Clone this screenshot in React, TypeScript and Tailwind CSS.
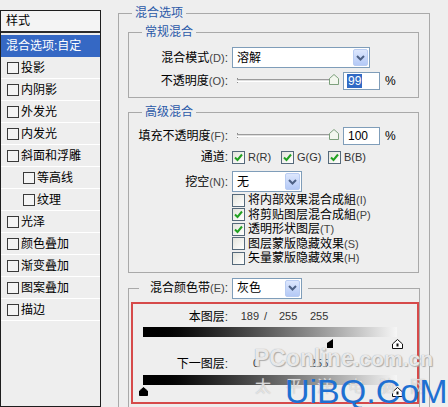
import React from "react";

const styleItems = [
  { t: "投影" },
  { t: "内阴影" },
  { t: "外发光" },
  { t: "内发光" },
  { t: "斜面和浮雕" },
  { t: "等高线", indent: true },
  { t: "纹理", indent: true },
  { t: "光泽" },
  { t: "颜色叠加" },
  { t: "渐变叠加" },
  { t: "图案叠加" },
  { t: "描边" },
];

const Label = ({ text, hk, w }: { text: string; hk?: string; w: string }) => (
  <div className={`${w} shrink-0 whitespace-nowrap text-right text-[12px] leading-[14px]`}>
    {text}
    {hk && <span className="text-[11px] text-[#444]">({hk})</span>}
    <span className="text-[#333]">:</span>
  </div>
);

const Chevron = () => (
  <svg width="9" height="6" viewBox="0 0 9 6">
    <path d="M1 1L4.5 4.5L8 1" fill="none" stroke="#4d6185" strokeWidth="2" />
  </svg>
);

const Select = ({ value, w }: { value: string; w: string }) => (
  <div className={`${w} flex h-[21px] shrink-0 items-center border border-[#7f9db9] bg-white pl-[4px] pr-[1px]`}>
    <span className="flex-1 text-[12px] leading-[14px]">{value}</span>
    <div className="flex h-[17px] w-[15px] items-center justify-center rounded-[2px] border border-[#b9ccf2] bg-linear-to-b from-[#dde7fd] to-[#b4c9f6]">
      <Chevron />
    </div>
  </div>
);

const Thumb = () => (
  <svg width="10" height="11" viewBox="0 0 10 11">
    <path d="M0.5 4.5L5 0.5L9.5 4.5V10.5H0.5Z" fill="#f3f7ef" stroke="#7da07d" />
  </svg>
);

const Slider = () => (
  <div className="relative ml-[9px] h-[18px] w-[101px] shrink-0">
    <div className="absolute left-0 top-[6px] h-[5px] w-[1px] bg-[#8a8a8a]" />
    <div className="absolute left-0 top-[7px] h-[3px] w-[96px] border-t border-b border-t-[#9c9c9c] border-b-white bg-[#dedede]" />
    <div className="absolute left-[92px] top-[2px]">
      <Thumb />
    </div>
  </div>
);

const Check = ({ checked }: { checked?: boolean }) => (
  <div className="flex h-[13px] w-[13px] shrink-0 items-center justify-center border border-[#55697a] bg-linear-to-br from-[#e4e4dc] to-white">
    {checked && (
      <svg width="9" height="9" viewBox="0 0 9 9">
        <path d="M1 4.5L3.5 7L8 1.5" fill="none" stroke="#21a121" strokeWidth="2" />
      </svg>
    )}
  </div>
);

const CheckRow = ({ text, hk, checked }: { text: string; hk: string; checked?: boolean }) => (
  <div className="flex h-[14.5px] items-center gap-[3px]">
    <Check checked={checked} />
    <span className="text-[12px] leading-[14px]">
      {text}
      <span className="text-[11px] text-[#444]">({hk})</span>
    </span>
  </div>
);

const HalfThumb = () => (
  <svg width="6" height="9" viewBox="0 0 6 9">
    <path d="M6 0V9H0V4Z" fill="#000" />
  </svg>
);

const BlackThumb = () => (
  <svg width="9" height="9" viewBox="0 0 9 9">
    <path d="M4.5 0.5L8.5 4V8.5H0.5V4Z" fill="#000" stroke="#000" />
  </svg>
);

const WhiteThumb = () => (
  <svg width="11" height="10" viewBox="0 0 11 10">
    <path d="M5.5 0.5L10.5 5V9.5H0.5V5Z" fill="#fff" stroke="#111" />
    <rect x="4.5" y="4.5" width="2" height="3" fill="#111" />
  </svg>
);

const App = () => {
  return (
    <div className="relative h-[407px] w-[448px] overflow-hidden bg-[#eeeeee] font-['Liberation_Sans','Noto_Sans_CJK_SC',sans-serif] text-black">
      <div className="flex items-start">
        {/* style list */}
        <div className="mt-[10px] h-[397px] w-[101px] shrink-0 border border-[#1e1e1e] bg-[#eeeeee]">
          <div className="flex h-[22px] items-center border-b-2 border-[#2a2a2a] bg-[#f4f4f4] pl-[5px] text-[12px] leading-[14px]">
            样式
          </div>
          <div className="mt-[2px] flex h-[22px] items-center bg-[#3568c4] pl-[5px] text-[12px] leading-[14px] text-white">
            混合选项:自定
          </div>
          {styleItems.map((it) => (
            <div
              key={it.t}
              className={`flex h-[22px] items-center gap-[2px] border-b border-white ${it.indent ? "pl-[22px]" : "pl-[6px]"}`}
            >
              <div className="h-[12px] w-[12px] border border-[#3a3a3a] bg-[#f4f4f4]" />
              <span className="text-[12px] leading-[14px]">{it.t}</span>
            </div>
          ))}
        </div>

        {/* blending options */}
        <fieldset className="ml-[17px] mt-[6px] h-[420px] w-[312px] shrink-0 border border-[#a9a9a9]">
          <legend className="ml-[13px] px-[3px] text-[12px] leading-[14px] text-[#2b59a8]">混合选项</legend>
          <div className="flex flex-col pt-[5px] pl-[9px]">
            <fieldset className="w-[291px] border border-[#a9a9a9]">
              <legend className="ml-[13px] px-[3px] text-[12px] leading-[14px] text-[#2b59a8]">常规混合</legend>
              <div className="flex flex-col pt-[8px] pb-[7px]">
                <div className="flex h-[21px] items-center">
                  <Label w="w-[99px]" text="混合模式" hk="D" />
                  <Select value="溶解" w="ml-[4px] w-[138px]" />
                </div>
                <div className="mt-[4px] flex h-[18px] items-center">
                  <Label w="w-[99px]" text="不透明度" hk="O" />
                  <Slider />
                  <div className="ml-[5px] flex h-[18px] w-[37px] items-center border border-[#7f9db9] bg-white pl-[3px]">
                    <span className="bg-[#316ac5] px-[1px] text-[12px] leading-[14px] text-white">99</span>
                  </div>
                  <span className="ml-[5px] text-[12px] leading-[14px]">%</span>
                </div>
              </div>
            </fieldset>

            <fieldset className="mt-[7px] w-[291px] border border-[#a9a9a9]">
              <legend className="ml-[13px] px-[3px] text-[12px] leading-[14px] text-[#2b59a8]">高级混合</legend>
              <div className="flex flex-col pt-[8px] pb-[6px]">
                <div className="flex h-[18px] items-center">
                  <Label w="w-[99px]" text="填充不透明度" hk="F" />
                  <Slider />
                  <div className="ml-[5px] flex h-[18px] w-[37px] items-center border border-[#7f9db9] bg-white pl-[4px]">
                    <span className="text-[12px] leading-[14px]">100</span>
                  </div>
                  <span className="ml-[5px] text-[12px] leading-[14px]">%</span>
                </div>
                <div className="mt-[4px] flex h-[16px] items-center">
                  <Label w="w-[99px]" text="通道" />
                  <div className="ml-[4px] flex w-[49px] items-center gap-[3px]">
                    <Check checked />
                    <span className="text-[11px] text-[#333]">R(R)</span>
                  </div>
                  <div className="flex w-[47px] items-center gap-[3px]">
                    <Check checked />
                    <span className="text-[11px] text-[#333]">G(G)</span>
                  </div>
                  <div className="flex items-center gap-[3px]">
                    <Check checked />
                    <span className="text-[11px] text-[#333]">B(B)</span>
                  </div>
                </div>
                <div className="mt-[6px] flex h-[21px] items-center">
                  <Label w="w-[99px]" text="挖空" hk="N" />
                  <Select value="无" w="ml-[4px] w-[70px]" />
                </div>
                <div className="ml-[103px] mt-[1px] flex flex-col">
                  <CheckRow text="将内部效果混合成組" hk="I" />
                  <CheckRow text="将剪贴图层混合成組" hk="P" checked />
                  <CheckRow text="透明形状图层" hk="T" checked />
                  <CheckRow text="图层蒙版隐藏效果" hk="S" />
                  <CheckRow text="矢量蒙版隐藏效果" hk="H" />
                </div>
              </div>
            </fieldset>

            <fieldset className="mt-[5px] h-[140px] w-[291px] border border-[#a9a9a9]">
              <legend className="ml-[10px] pr-[6px]">
                <div className="flex h-[21px] items-center">
                  <Label w="w-[89px]" text="混合颜色带" hk="E" />
                  <Select value="灰色" w="ml-[4px] w-[70px]" />
                </div>
              </legend>
              <div className="flex flex-col pt-[3px] pl-[2px]">
                <div className="flex h-[102px] w-[288px] flex-col border-2 border-[#d64a4a] pt-[6px]">
                  <div className="flex h-[14px] items-center">
                    <Label w="w-[95px]" text="本图层" />
                    <span className="ml-[12px] w-[19px] text-right text-[11px] text-[#333]">189</span>
                    <span className="w-[20px] pl-[5px] text-[11px] text-[#333]">/</span>
                    <span className="w-[31px] text-[11px] text-[#333]">255</span>
                    <span className="text-[11px] text-[#333]">255</span>
                  </div>
                  <div className="ml-[10px] mt-[3px] h-[10px] w-[254px] bg-linear-to-r from-black to-[#f6f6f6]" />
                  <div className="relative ml-[10px] mt-[2px] h-[10px] w-[254px]">
                    <div className="absolute left-[184px] top-0">
                      <HalfThumb />
                    </div>
                    <div className="absolute left-[249px] top-0">
                      <WhiteThumb />
                    </div>
                  </div>
                  <div className="mt-[8px] flex h-[14px] items-center">
                    <Label w="w-[95px]" text="下一图层" />
                    <span className="ml-[12px] w-[19px] text-right text-[11px] text-[#333]">0</span>
                    <span className="ml-[51px] text-[11px] text-[#333]">255</span>
                  </div>
                  <div className="ml-[10px] mt-[4px] h-[10px] w-[254px] bg-linear-to-r from-black to-[#f6f6f6]" />
                  <div className="relative ml-[10px] mt-[2px] h-[10px] w-[254px]">
                    <div className="absolute left-[-4px] top-0">
                      <BlackThumb />
                    </div>
                    <div className="absolute left-[249px] top-0">
                      <WhiteThumb />
                    </div>
                  </div>
                </div>
              </div>
            </fieldset>
          </div>
        </fieldset>
      </div>

      {/* watermarks */}
      <div className="absolute left-[254px] top-[347px] whitespace-nowrap text-[23px] font-bold leading-none text-white/80 [text-shadow:0_0_1px_#8a8a8a,1px_1px_1px_#b0b0b0]">
        PConline<span className="text-[21px]">.com.cn</span>
      </div>
      <div className="absolute left-[255px] top-[379px] whitespace-nowrap text-[16px] leading-none tracking-[15px] text-white/60 [text-shadow:0_0_1px_#aaa]">
        太平洋电脑网
      </div>
      <div className="absolute left-[285px] top-[374px] whitespace-nowrap font-['Liberation_Sans',sans-serif] text-[34px] leading-none text-[#1e70d2]">
        UiBQ.CoM
      </div>
    </div>
  );
};

export default App;
